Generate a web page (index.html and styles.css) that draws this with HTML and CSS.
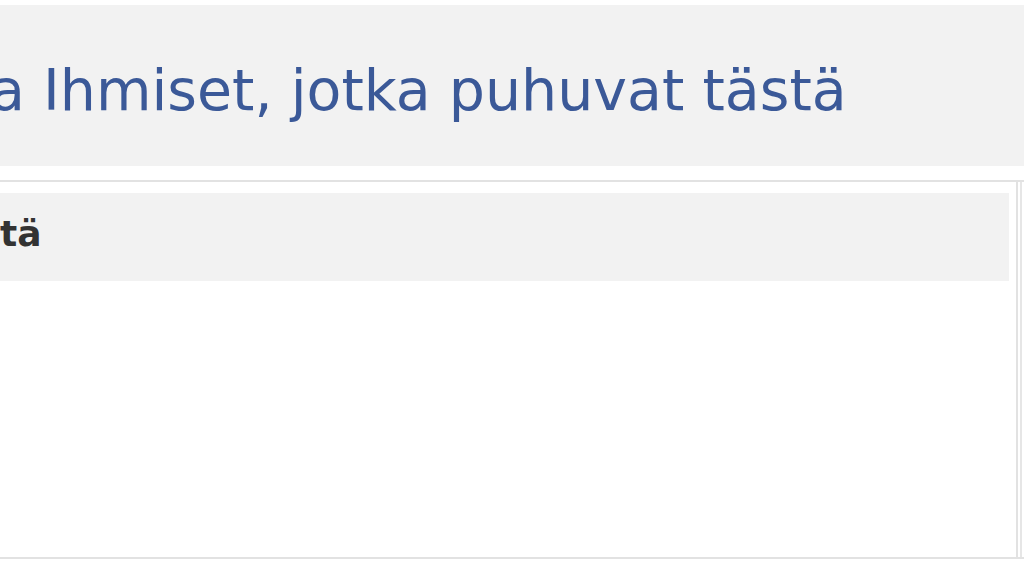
FILE: index.html
```
<!DOCTYPE html>
<html lang="fi">
<head>
    <meta charset="UTF-8">
    <meta name="viewport" content="width=device-width, initial-scale=1.0">
    <title>Ihmiset, jotka puhuvat tästä</title>
    <link rel="stylesheet" href="styles.css">
</head>
<body>
    <div class="page-head">
        <h1 class="title">a Ihmiset, jotka puhuvat tästä</h1>
    </div>

    <div class="columns">
        <div class="panel">
            <div class="panel-bar">
                <h2>tä</h2>
            </div>
        </div>
        <div class="side"></div>
    </div>
</body>
</html>
```

FILE: styles.css
```
body, html {
    margin: 0;
    background-color: #ffffff;
    font-family: "DejaVu Sans", "Lucida Grande", sans-serif;
    overflow: hidden;
}

.page-head {
    margin-top: 5px;
    height: 161px;
    padding: 56px 0 0 0;
    box-sizing: border-box;
    background-color: #f2f2f2;
}

.title {
    margin: 0 0 0 -10px;
    font-size: 57px;
    line-height: 58px;
    font-weight: normal;
    color: #3b5998;
    white-space: nowrap;
}

.columns {
    display: flex;
    margin-top: 14px;
    height: 375px;
    border-top: 2px solid #e2e2e2;
    border-bottom: 2px solid #e2e2e2;
}

.panel {
    flex: 0 0 1018px;
    box-sizing: border-box;
    border-right: 2px solid #e2e2e2;
    padding: 11px 7px 0 0;
}

.panel-bar {
    height: 88px;
    background-color: #f2f2f2;
    padding-top: 23px;
    box-sizing: border-box;
}

.panel-bar h2 {
    margin: 0;
    font-size: 36px;
    line-height: 36px;
    font-weight: bold;
    color: #333333;
}

.side {
    flex: 1;
    margin-left: 2px;
    border-left: 2px solid #e6e6e6;
}
```
